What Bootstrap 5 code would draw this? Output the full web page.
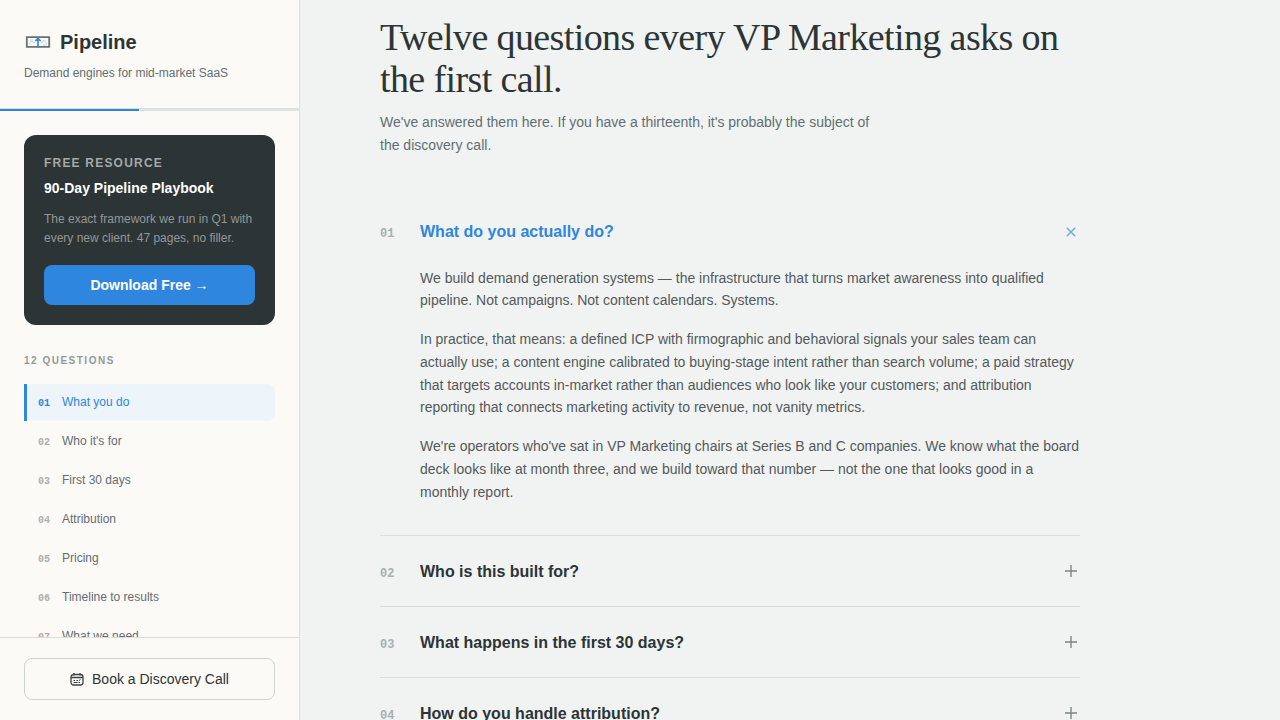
<!DOCTYPE html>
<html lang="en">
<head>
<meta charset="utf-8">
<meta name="viewport" content="width=device-width, initial-scale=1">
<title>Pipeline</title>
<link href="https://cdn.jsdelivr.net/npm/bootstrap@5.3.0/dist/css/bootstrap.min.css" rel="stylesheet">
<style>
  :root { --ink: #2d3436; --muted: #636e72; --blue: #2e86de; --paper: #fbfaf6; --mist: #f0f3f2; --rule: #dadfde; }
  body { font-family: "Liberation Sans", Arial, sans-serif; font-size: 14px; color: var(--ink); background: var(--mist); }
  .side { width: 300px; background: var(--paper); border-right: 1px solid var(--rule); }
  .brand-area { padding: 28px 24px 26px; border-bottom: 1px solid var(--rule); }
  .brand-name { font-size: 20px; line-height: 28px; font-weight: 700; }
  .tagline { font-size: 12px; line-height: 18px; color: var(--muted); }
  .read-bar { height: 2px; border-radius: 0; background: #dce3e0; }
  .read-bar .progress-bar { background: var(--blue); }
  .scroller { overflow-y: auto; scrollbar-width: none; min-height: 0; }
  .scroller::-webkit-scrollbar { display: none; }
  .offer { background: var(--ink); border-radius: 12px; padding: 20px; color: #fff; }
  .offer-label { font-size: 12px; line-height: 16px; letter-spacing: 1.2px; color: #a3a8a8; font-weight: 700; margin-bottom: 6px; }
  .offer-title { font-size: 14px; line-height: 22px; font-weight: 700; margin-bottom: 11px; }
  .offer-text { font-size: 12px; line-height: 19px; color: #929798; margin-bottom: 17px; }
  .btn-offer { --bs-btn-bg: var(--blue); --bs-btn-color: #fff; --bs-btn-hover-bg: #2475c6; --bs-btn-hover-color: #fff; height: 40px; border: 0; border-radius: 8px; font-size: 14px; font-weight: 700; }
  .list-label { font-size: 10px; line-height: 16px; font-weight: 700; letter-spacing: 1.5px; color: #929a99; margin: 28px 0 15px; }
  .toc { gap: 2px; }
  .toc a { position: relative; display: flex; align-items: baseline; gap: 12px; height: 37px; padding: 9px 14px; border-radius: 8px; font-size: 12px; line-height: 18px; color: var(--muted); text-decoration: none; }
  .toc span, .q-num { font-family: "Liberation Mono", monospace; font-weight: 700; color: #aab0b0; }
  .toc span { font-size: 10px; }
  .toc a.active { background: #edf4fa; color: var(--blue); }
  .toc a.active span { color: var(--blue); }
  .toc a.active::before { content: ""; position: absolute; inset: 0 auto 0 0; width: 3px; background: var(--blue); }
  .side-foot { padding: 20px 24px; border-top: 1px solid var(--rule); }
  .btn-call { --bs-btn-color: var(--ink); --bs-btn-border-color: #cfd3d0; --bs-btn-hover-border-color: var(--ink); height: 42px; border-radius: 8px; font-size: 14px; }
  .page-col { max-width: 780px; padding: 16px 0 40px 80px; }
  h1 { font-family: "Liberation Serif", "Times New Roman", serif; font-size: 38px; line-height: 42px; font-weight: 400; letter-spacing: -0.016em; margin-bottom: 11px; }
  .intro { max-width: 500px; line-height: 1.625; color: var(--muted); margin-bottom: 40px; }
  .faq { border-bottom: 1px solid var(--rule); }
  .faq h2 { margin: 0; }
  .q-btn { height: 70px; padding: 0; border: 0; background: none; color: var(--ink); font-size: 16px; font-weight: 700; text-align: left; }
  .q-num { width: 40px; font-size: 12px; }
  .q-btn svg { stroke: #7d8587; }
  .q-btn[aria-expanded="true"] { color: var(--blue); }
  .q-btn[aria-expanded="true"] svg { stroke: #6fa6dc; transform: rotate(45deg); }
  .answer { padding: 0 0 32px 40px; line-height: 1.625; color: #54595b; }
  .answer p:last-child { margin-bottom: 0; }
</style>
</head>
<body>
<div class="d-flex vh-100 overflow-hidden">
  <aside class="side d-flex flex-column flex-shrink-0">
    <header class="brand-area">
      <div class="d-flex align-items-center gap-2 mb-2">
        <svg width="28" height="28" viewBox="0 0 28 28" fill="none" aria-hidden="true">
          <path d="M2.800 9.200h22.400v9.600H2.800z" stroke="#697174" stroke-width="1.800"/>
          <path d="M5 16.500l3-4 2 3 2-4M16 12l2 3 2-3 3 4M6 12h3M19 17h4" stroke="#cdd5d8"/>
          <path d="M14 19.500v-8M11.500 13L14 10.500l2.500 2.500" stroke="#2e86de" stroke-width="1.600"/>
        </svg>
        <span class="brand-name">Pipeline</span>
      </div>
      <div class="tagline">Demand engines for mid-market SaaS</div>
    </header>
    <div class="progress read-bar flex-shrink-0" role="progressbar" aria-label="Reading progress" aria-valuenow="46" aria-valuemin="0" aria-valuemax="100"><div class="progress-bar" style="width:46.4%"></div></div>
    <div class="scroller flex-fill p-4 pb-0">
      <section class="offer">
        <div class="offer-label">FREE RESOURCE</div>
        <div class="offer-title">90-Day Pipeline Playbook</div>
        <p class="offer-text">The exact framework we run in Q1 with every new client. 47 pages, no filler.</p>
        <button type="button" class="btn btn-offer w-100">Download Free →</button>
      </section>
      <div class="list-label">12 QUESTIONS</div>
      <nav class="toc d-flex flex-column" aria-label="Questions">
        <a href="#q1" class="active"><span>01</span>What you do</a>
        <a href="#q2"><span>02</span>Who it's for</a>
        <a href="#q3"><span>03</span>First 30 days</a>
        <a href="#q4"><span>04</span>Attribution</a>
        <a href="#q5"><span>05</span>Pricing</a>
        <a href="#q6"><span>06</span>Timeline to results</a>
        <a href="#q7"><span>07</span>What we need</a>
      </nav>
    </div>
    <footer class="side-foot">
      <button type="button" class="btn btn-call w-100 d-flex align-items-center justify-content-center gap-2">
        <svg width="14" height="14" viewBox="0 0 14 14" fill="none" stroke="#3d4446" stroke-width="1.300" aria-hidden="true">
          <rect x="1" y="2.500" width="12" height="10.500" rx="2.500"/>
          <path d="M1 5.500h12M4 1v2.500M10 1v2.500"/>
          <path d="M3.500 8.500h1.500M6.500 8.500h1.500M9 8.500l1.500-1M3.500 10.500h4M8.500 10.500h1.500" stroke-width="1"/>
        </svg>
        Book a Discovery Call
      </button>
    </footer>
  </aside>
  <main class="scroller flex-fill">
    <div class="page-col">
      <h1>Twelve questions every VP Marketing asks on the first call.</h1>
      <p class="intro">We've answered them here. If you have a thirteenth, it's probably the subject of the discovery call.</p>
      <section class="faq" id="q1">
        <h2><button type="button" class="q-btn w-100 d-flex align-items-center" data-bs-toggle="collapse" data-bs-target="#a1" aria-controls="a1" aria-expanded="true">
          <span class="d-flex flex-fill align-items-baseline"><span class="q-num">01</span><span>What do you actually do?</span></span>
          <svg width="18" height="18" viewBox="0 0 18 18" stroke-width="1.400" aria-hidden="true"><path d="M9 3v12M3 9h12"/></svg>
        </button></h2>
        <div class="collapse show" id="a1">
          <div class="answer">
            <p>We build demand generation systems — the infrastructure that turns market awareness into qualified pipeline. Not campaigns. Not content calendars. Systems.</p>
            <p>In practice, that means: a defined ICP with firmographic and behavioral signals your sales team can actually use; a content engine calibrated to buying-stage intent rather than search volume; a paid strategy that targets accounts in-market rather than audiences who look like your customers; and attribution reporting that connects marketing activity to revenue, not vanity metrics.</p>
            <p>We're operators who've sat in VP Marketing chairs at Series B and C companies. We know what the board deck looks like at month three, and we build toward that number — not the one that looks good in a monthly report.</p>
          </div>
        </div>
      </section>
      <section class="faq" id="q2">
        <h2><button type="button" class="q-btn w-100 d-flex align-items-center" aria-expanded="false">
          <span class="d-flex flex-fill align-items-baseline"><span class="q-num">02</span><span>Who is this built for?</span></span>
          <svg width="18" height="18" viewBox="0 0 18 18" stroke-width="1.400" aria-hidden="true"><path d="M9 3v12M3 9h12"/></svg>
        </button></h2>
      </section>
      <section class="faq" id="q3">
        <h2><button type="button" class="q-btn w-100 d-flex align-items-center" aria-expanded="false">
          <span class="d-flex flex-fill align-items-baseline"><span class="q-num">03</span><span>What happens in the first 30 days?</span></span>
          <svg width="18" height="18" viewBox="0 0 18 18" stroke-width="1.400" aria-hidden="true"><path d="M9 3v12M3 9h12"/></svg>
        </button></h2>
      </section>
      <section class="faq" id="q4">
        <h2><button type="button" class="q-btn w-100 d-flex align-items-center" aria-expanded="false">
          <span class="d-flex flex-fill align-items-baseline"><span class="q-num">04</span><span>How do you handle attribution?</span></span>
          <svg width="18" height="18" viewBox="0 0 18 18" stroke-width="1.400" aria-hidden="true"><path d="M9 3v12M3 9h12"/></svg>
        </button></h2>
      </section>
    </div>
  </main>
</div>
<script src="https://cdn.jsdelivr.net/npm/bootstrap@5.3.0/dist/js/bootstrap.bundle.min.js"></script>
</body>
</html>
